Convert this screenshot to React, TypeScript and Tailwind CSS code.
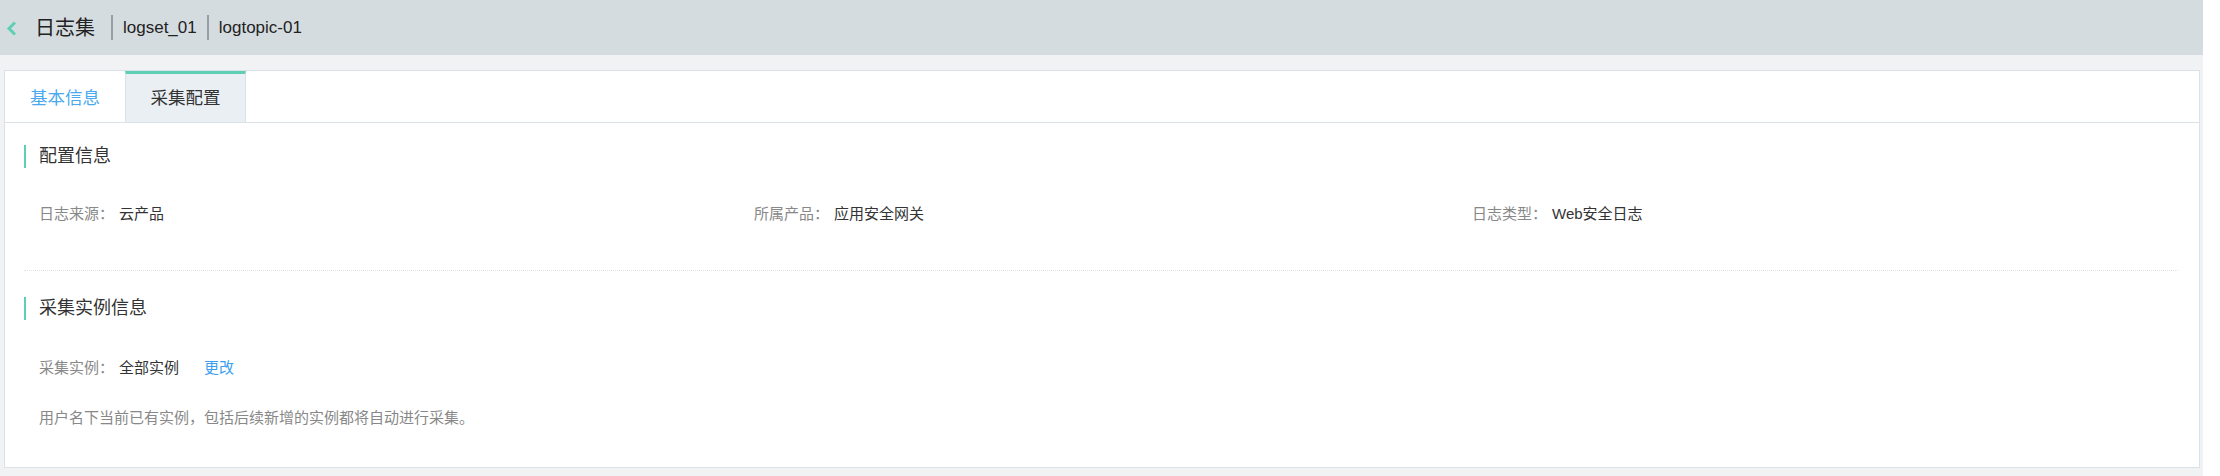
import React from 'react';

const FONT = '"Liberation Sans", "Noto Sans CJK SC", sans-serif';

const SectionTitle: React.FC<{ title: string }> = ({ title }) => (
  <div className="flex items-center h-[23px]">
    <div className="w-[2px] h-[23px] bg-[#5dcfb2]" />
    <span className="ml-[13px] text-[18px] leading-[23px] text-[#333]">{title}</span>
  </div>
);

const Field: React.FC<{ label: string; value: string }> = ({ label, value }) => (
  <div className="flex items-center h-[24px] text-[15px] leading-[24px]">
    <span className="text-[#888]">{label}</span>
    <span className="ml-[5px] text-[#333]">{value}</span>
  </div>
);

export default function App() {
  return (
    <div className="flex w-[2220px] h-[476px] bg-white overflow-hidden" style={{ fontFamily: FONT }}>
      <div className="w-[2203px] flex flex-col bg-[#f1f2f4]">
        {/* top bar */}
        <div className="h-[55px] bg-[#d5dce0] flex items-center pl-[6px] shrink-0">
          <svg width="11" height="15" viewBox="0 0 11 15" className="mt-[1px]">
            <path d="M9 1.5 L3 7.5 L9 13.5" fill="none" stroke="#5dcfb2" strokeWidth="3" />
          </svg>
          <span className="ml-[18px] text-[20px] text-[#222]">日志集</span>
          <div className="ml-[16px] w-[2px] h-[25px] bg-[#9a9ea2]" />
          <span className="ml-[10px] text-[17px] text-[#222]">logset_01</span>
          <div className="ml-[10px] w-[2px] h-[25px] bg-[#9a9ea2]" />
          <span className="ml-[10px] text-[17px] text-[#222]">logtopic-01</span>
        </div>

        <div className="pt-[15px] pl-[4px] pr-[3px]">
          <div className="bg-white border border-[#dae1e7]">
            {/* tabs */}
            <div className="flex h-[52px] border-b border-[#dae1e7]">
              <div className="w-[120px] flex items-center justify-center pt-[3px] text-[17.5px] text-[#49a9ee]">
                基本信息
              </div>
              <div className="w-[121px] flex items-center justify-center bg-[#eaeff3] border-t-[3px] border-[#5dcfb2] border-l border-r border-l-[#dae1e7] border-r-[#dae1e7] text-[17.5px] text-[#333]">
                采集配置
              </div>
            </div>

            <div className="pl-[19px] pr-[21px] pt-[22px] pb-[37px]">
              <SectionTitle title="配置信息" />
              <div className="mt-[34px] pl-[15px] grid grid-cols-[715px_718px_1fr]">
                <Field label="日志来源：" value="云产品" />
                <Field label="所属产品：" value="应用安全网关" />
                <Field label="日志类型：" value="Web安全日志" />
              </div>

              <div className="mt-[44px] border-t border-dotted border-[#dfe3e8]" />

              <div className="mt-[26px]">
                <SectionTitle title="采集实例信息" />
              </div>
              <div className="mt-[36px] pl-[15px] flex items-center h-[24px] text-[15px] leading-[24px]">
                <span className="text-[#888]">采集实例：</span>
                <span className="ml-[5px] text-[#333]">全部实例</span>
                <span className="ml-[25px] text-[#3d9ff0] cursor-pointer">更改</span>
              </div>
              <div className="mt-[26px] pl-[15px] h-[24px] text-[15px] leading-[24px] text-[#888]">
                用户名下当前已有实例，包括后续新增的实例都将自动进行采集。
              </div>
            </div>
          </div>
        </div>
      </div>
      <div className="flex-1 bg-white" />
    </div>
  );
}
